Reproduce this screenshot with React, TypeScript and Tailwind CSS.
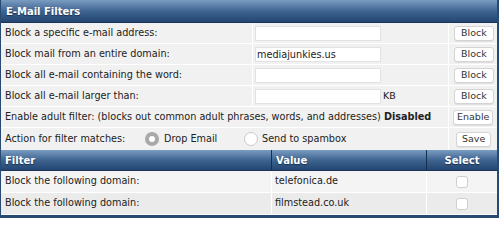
import React from "react";

const font = { fontFamily: '"DejaVu Sans", Verdana, sans-serif' };

function BarHead({ children, className = "" }: { children?: React.ReactNode; className?: string }) {
  return (
    <div
      className={`flex items-center bg-gradient-to-b from-[#7b9cc2] via-[#3f6591] to-[#234571] border-b border-[#1b3558] text-white font-bold text-[10px] [text-shadow:0_1px_1px_#1a2f4d] ${className}`}
    >
      {children}
    </div>
  );
}

function Btn({ label, pad = "px-[6px]" }: { label: string; pad?: string }) {
  return (
    <button className={`h-[15px] ${pad} rounded-[3px] bg-white border border-[#d4d4d4] text-[9.5px] leading-none text-[#333] shadow-[0_1px_0_#e0e0e0]`}>
      {label}
    </button>
  );
}

function TextBox({ value = "" }: { value?: string }) {
  return (
    <div className="w-[126px] h-[15px] bg-white border border-[#e2e2e2] text-[9.7px] leading-[13px] px-[1px] text-[#222]">
      {value}
    </div>
  );
}

const rows = [
  { label: "Block a specific e-mail address:", value: "" },
  { label: "Block mail from an entire domain:", value: "mediajunkies.us" },
  { label: "Block all e-mail containing the word:", value: "" },
  { label: "Block all e-mail larger than:", value: "", kb: true },
];

export default function App() {
  return (
    <div style={font} className="w-[500px] h-[218px] bg-white overflow-hidden">
      <div className="w-[499px] h-[218px] border-l border-r-2 border-b-[3px] border-[#274a73] flex flex-col text-[#222] text-[9.7px]">
        <BarHead className="h-[23px] pl-[5px] shrink-0">E-Mail Filters</BarHead>

        {rows.map((r, i) => (
          <div key={i} className="grid grid-cols-[251px_195px_1fr] gap-x-px bg-white h-[21px] border-b border-white">
            <div className="bg-[#f1f1f1] flex items-center pl-[4px]">{r.label}</div>
            <div className="bg-[#f1f1f1] flex items-center pl-[2px]">
              <TextBox value={r.value} />
              {r.kb && <span className="ml-[2px] text-[9.5px]">KB</span>}
            </div>
            <div className="bg-[#f1f1f1] flex items-center pl-[5px]">
              <Btn label="Block" />
            </div>
          </div>
        ))}

        <div className="grid grid-cols-[447px_1fr] gap-x-px bg-white h-[21px] border-b border-white">
          <div className="bg-[#f1f1f1] flex items-center pl-[4px] whitespace-nowrap">
            Enable adult filter: (blocks out common adult phrases, words, and addresses)&nbsp;<b>Disabled</b>
          </div>
          <div className="bg-[#f1f1f1] flex items-center pl-[4px]">
            <Btn label="Enable" pad="px-[3px]" />
          </div>
        </div>

        <div className="grid grid-cols-[447px_1fr] gap-x-px bg-white h-[22px]">
          <div className="bg-[#f1f1f1] flex items-center pl-[4px]">
            <span className="w-[140px]">Action for filter matches:</span>
            <span className="w-[14px] h-[14px] rounded-full bg-[#a9a9a9] flex items-center justify-center">
              <span className="w-[6px] h-[6px] rounded-full bg-white" />
            </span>
            <span className="ml-[5px] w-[80px]">Drop Email</span>
            <span className="w-[14px] h-[14px] rounded-full bg-white border border-[#c9c9c9]" />
            <span className="ml-[4px]">Send to spambox</span>
          </div>
          <div className="bg-[#f1f1f1] flex items-center pl-[7px]">
            <Btn label="Save" pad="px-[5px]" />
          </div>
        </div>

        <div className="grid grid-cols-[270px_154px_1fr] gap-x-px bg-[#16304f] h-[21px]">
          <BarHead className="pl-[4px]">Filter</BarHead>
          <BarHead className="pl-[4px]">Value</BarHead>
          <BarHead className="justify-center">Select</BarHead>
        </div>

        {[
          { f: "Block the following domain:", v: "telefonica.de", bg: "bg-[#f4f4f4]" },
          { f: "Block the following domain:", v: "filmstead.co.uk", bg: "bg-[#ebebeb]" },
        ].map((r, i) => (
          <div key={i} className="grid grid-cols-[270px_154px_1fr] gap-x-px bg-white h-[22px] border-b border-white">
            <div className={`${r.bg} flex items-center pl-[4px]`}>{r.f}</div>
            <div className={`${r.bg} flex items-center pl-[3px]`}>{r.v}</div>
            <div className={`${r.bg} flex items-center justify-center`}>
              <span className="w-[12px] h-[12px] rounded-[3px] bg-white border border-[#cfcfcf]" />
            </div>
          </div>
        ))}
      </div>
    </div>
  );
}
